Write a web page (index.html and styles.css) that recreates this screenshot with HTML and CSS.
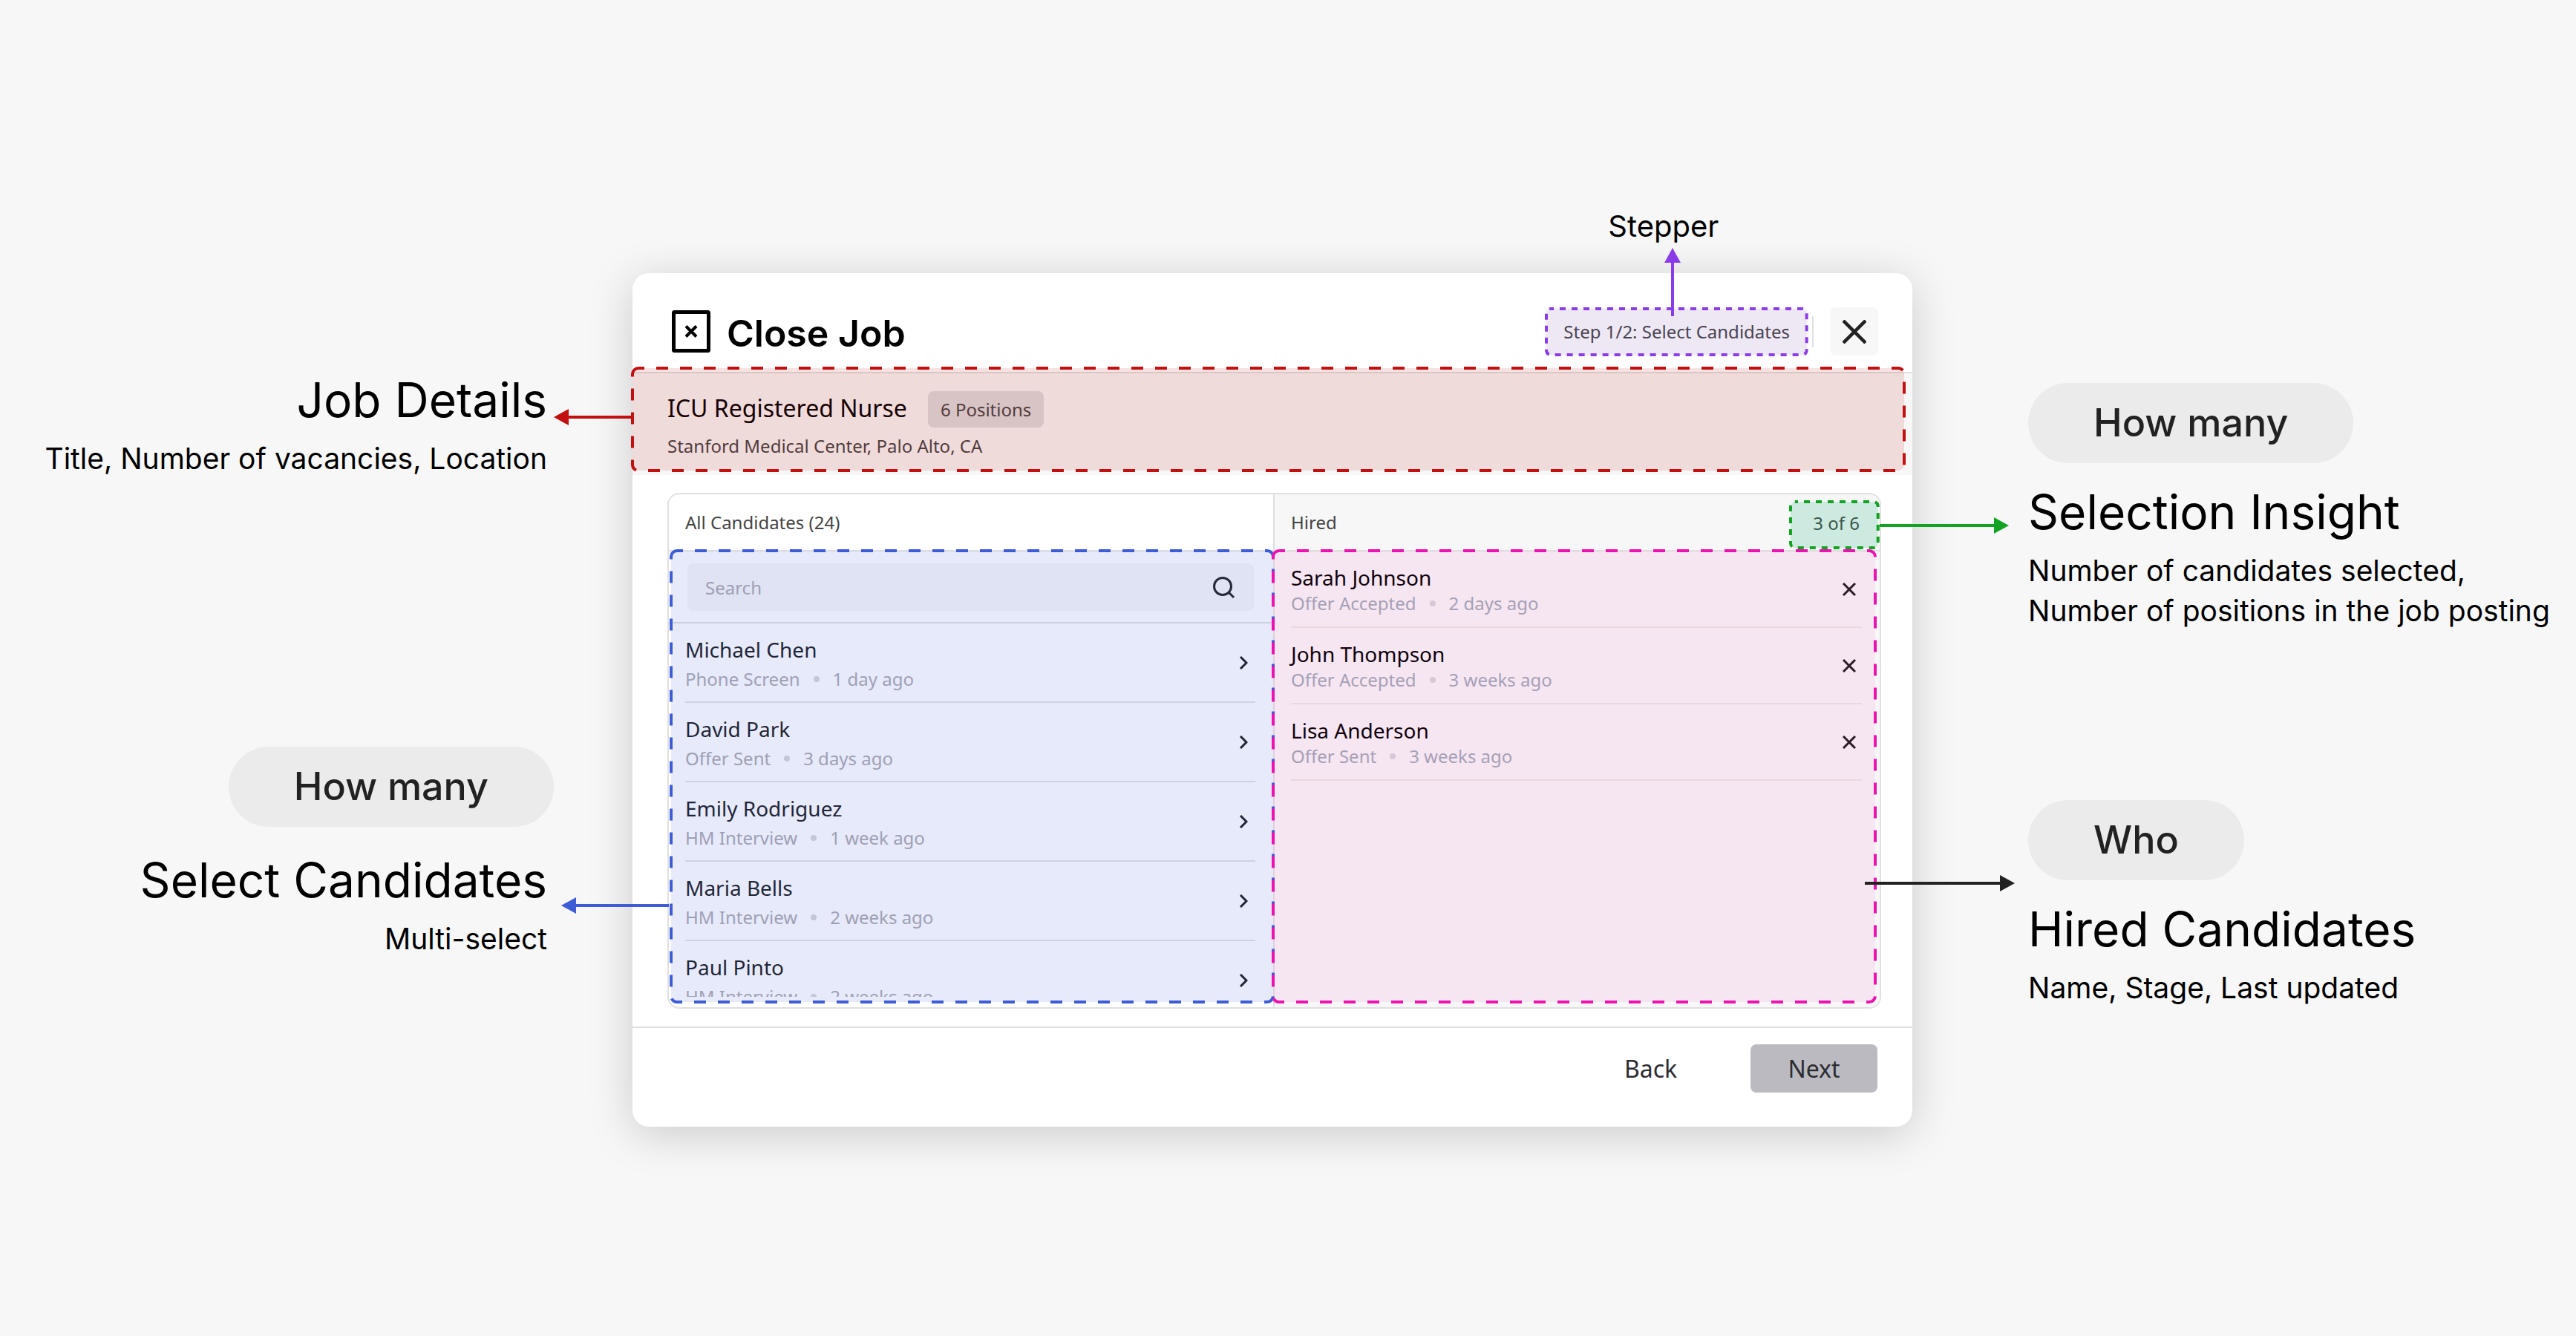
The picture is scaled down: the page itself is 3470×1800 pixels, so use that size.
FILE: index.html
```html
<!DOCTYPE html>
<html lang="en">
<head>
    <meta charset="utf-8">
    <title>Close Job - annotated modal</title>
    <link rel="stylesheet" href="styles.css">
</head>
<body>
    <main class="board">

        <!-- notes on the left -->
        <aside class="notes notes-left">
            <section class="note">
                <h2>Job Details</h2>
                <p>Title, Number of vacancies, Location</p>
            </section>
            <section class="note">
                <span class="pill">How many</span>
                <h2>Select Candidates</h2>
                <p>Multi-select</p>
            </section>
        </aside>

        <div class="modal" role="dialog" aria-labelledby="modal-title">
            <header class="modal-header">
                <svg class="title-icon" viewBox="0 0 52 57" fill="none" stroke="#000" stroke-width="5">
                    <rect x="2.500" y="2.500" width="47" height="52" rx="1"/>
                    <path d="M19 21.500l14 14M33 21.500l-14 14" stroke-width="4"/>
                </svg>
                <h1 id="modal-title">Close Job</h1>
                <div class="step">
                    Step 1/2: Select Candidates
                    <svg class="outline outline-step"><rect rx="6"/></svg>
                    <span class="step-note">Stepper</span>
                    <svg class="arrow arrow-step" viewBox="0 0 22 92">
                        <path d="M11 16V92" stroke="#8a3ce8" stroke-width="4"/>
                        <path d="M11 0L22 20H0z" fill="#8a3ce8"/>
                    </svg>
                </div>
                <span class="header-rule"></span>
                <button class="close" type="button" aria-label="Close">
                    <svg width="32" height="32" viewBox="0 0 32 32" fill="none" stroke="#222" stroke-width="4.500">
                        <path d="M1 1l30 30M31 1L1 31"/>
                    </svg>
                </button>
            </header>

            <section class="job">
                <div class="job-row">
                    <h3>ICU Registered Nurse</h3>
                    <span class="badge">6 Positions</span>
                </div>
                <p>Stanford Medical Center, Palo Alto, CA</p>
                <svg class="outline outline-job"><rect rx="8"/></svg>
                <svg class="arrow arrow-job" viewBox="0 0 106 22">
                    <path d="M16 11H106" stroke="#c20f0f" stroke-width="4"/>
                    <path d="M0 11L20 0V22z" fill="#c20f0f"/>
                </svg>
            </section>

            <div class="panel">
                <section class="col">
                    <div class="col-head">All Candidates (24)</div>
                    <div class="col-body">
                        <div class="search">
                            <input type="text" placeholder="Search" aria-label="Search candidates">
                            <svg class="search-icon" viewBox="0 0 30 30" fill="none" stroke="#222" stroke-width="3">
                                <circle cx="13" cy="13" r="11.500"/>
                                <path d="M21 21l7 7"/>
                            </svg>
                        </div>
                        <ul class="list">
                            <li>
                                <div><strong>Michael Chen</strong><p>Phone Screen <i></i> 1 day ago</p></div>
                                <button type="button" aria-label="Add Michael Chen"><svg width="12" height="18" viewBox="0 0 12 18"><path d="M2 1l8 8-8 8"/></svg></button>
                            </li>
                            <li>
                                <div><strong>David Park</strong><p>Offer Sent <i></i> 3 days ago</p></div>
                                <button type="button" aria-label="Add David Park"><svg width="12" height="18" viewBox="0 0 12 18"><path d="M2 1l8 8-8 8"/></svg></button>
                            </li>
                            <li>
                                <div><strong>Emily Rodriguez</strong><p>HM Interview <i></i> 1 week ago</p></div>
                                <button type="button" aria-label="Add Emily Rodriguez"><svg width="12" height="18" viewBox="0 0 12 18"><path d="M2 1l8 8-8 8"/></svg></button>
                            </li>
                            <li>
                                <div><strong>Maria Bells</strong><p>HM Interview <i></i> 2 weeks ago</p></div>
                                <button type="button" aria-label="Add Maria Bells"><svg width="12" height="18" viewBox="0 0 12 18"><path d="M2 1l8 8-8 8"/></svg></button>
                            </li>
                            <li>
                                <div><strong>Paul Pinto</strong><p>HM Interview <i></i> 2 weeks ago</p></div>
                                <button type="button" aria-label="Add Paul Pinto"><svg width="12" height="18" viewBox="0 0 12 18"><path d="M2 1l8 8-8 8"/></svg></button>
                            </li>
                        </ul>
                        <svg class="outline outline-all"><rect rx="8"/></svg>
                        <svg class="arrow arrow-all" viewBox="0 0 145 22">
                            <path d="M16 11H145" stroke="#3d5cd6" stroke-width="4"/>
                            <path d="M0 11L20 0V22z" fill="#3d5cd6"/>
                        </svg>
                    </div>
                </section>

                <section class="col col-hired">
                    <div class="col-head">
                        Hired
                        <div class="count">
                            3 of 6
                            <svg class="outline outline-count"><rect rx="6"/></svg>
                            <svg class="arrow arrow-count" viewBox="0 0 174 22">
                                <path d="M0 11H158" stroke="#12a322" stroke-width="4"/>
                                <path d="M174 11L154 0V22z" fill="#12a322"/>
                            </svg>
                        </div>
                    </div>
                    <div class="col-body">
                        <ul class="list">
                            <li>
                                <div><strong>Sarah Johnson</strong><p>Offer Accepted <i></i> 2 days ago</p></div>
                                <button type="button" aria-label="Remove Sarah Johnson"><svg width="18" height="18" viewBox="0 0 18 18"><path d="M1 1l16 16M17 1L1 17"/></svg></button>
                            </li>
                            <li>
                                <div><strong>John Thompson</strong><p>Offer Accepted <i></i> 3 weeks ago</p></div>
                                <button type="button" aria-label="Remove John Thompson"><svg width="18" height="18" viewBox="0 0 18 18"><path d="M1 1l16 16M17 1L1 17"/></svg></button>
                            </li>
                            <li>
                                <div><strong>Lisa Anderson</strong><p>Offer Sent <i></i> 3 weeks ago</p></div>
                                <button type="button" aria-label="Remove Lisa Anderson"><svg width="18" height="18" viewBox="0 0 18 18"><path d="M1 1l16 16M17 1L1 17"/></svg></button>
                            </li>
                        </ul>
                        <svg class="outline outline-hired"><rect rx="8"/></svg>
                        <svg class="arrow arrow-hired" viewBox="0 0 202 22">
                            <path d="M0 11H186" stroke="#222" stroke-width="4"/>
                            <path d="M202 11L182 0V22z" fill="#222"/>
                        </svg>
                    </div>
                </section>
            </div>

            <footer class="modal-footer">
                <button class="btn" type="button">Back</button>
                <button class="btn btn-next" type="button">Next</button>
            </footer>
        </div>

        <!-- notes on the right -->
        <aside class="notes notes-right">
            <section class="note">
                <span class="pill">How many</span>
                <h2>Selection Insight</h2>
                <p>Number of candidates selected,<br>Number of positions in the job posting</p>
            </section>
            <section class="note">
                <span class="pill">Who</span>
                <h2>Hired Candidates</h2>
                <p>Name, Stage, Last updated</p>
            </section>
        </aside>

    </main>
</body>
</html>
```

FILE: styles.css
```css
* {
    box-sizing: border-box;
}

body {
    margin: 0;
    min-height: 100vh;
    background: #f7f7f7;
    color: #000;
    font-family: "Noto Sans", sans-serif;
    font-size: 24px;
    line-height: 32px;
}

h1, h2, h3, p, ul {
    margin: 0;
    padding: 0;
    font-weight: 400;
}

button {
    border: none;
    padding: 0;
    background: none;
    color: inherit;
    font-family: inherit;
    cursor: pointer;
}

.board {
    display: grid;
    grid-template-columns: 852fr 1724fr 894fr;
    align-items: start;
}

/* notes */
.notes {
    display: flex;
    flex-direction: column;
    font-family: "Inter", sans-serif;
    white-space: nowrap;
}

.notes-left {
    padding: 503px 115px 0 0;
    gap: 361px;
    text-align: right;
}

.notes-right {
    padding: 516px 0 0 156px;
    gap: 228px;
}

.note h2 {
    margin-bottom: 16px;
    font-size: 64px;
    line-height: 72px;
}

.note p {
    font-size: 39px;
    line-height: 54px;
}

.pill {
    display: block;
    width: fit-content;
    margin-bottom: 30px;
    padding: 0 88px;
    border-radius: 54px;
    background: #ebebeb;
    color: #222;
    font-size: 52px;
    font-weight: 500;
    line-height: 108px;
}

.notes-left .pill {
    margin-left: auto;
    margin-right: -9px;
    margin-bottom: 36px;
}

/* modal */
.modal {
    margin-top: 368px;
    border-radius: 22px;
    background: #fff;
    box-shadow: 0 10px 60px rgba(0, 0, 0, 0.18);
}

.modal-header {
    display: flex;
    align-items: center;
    height: 133px;
    padding: 24px 46px 0 53px;
}

.title-icon {
    width: 52px;
    height: 57px;
    margin-right: 22px;
}

.modal-header h1 {
    padding-top: 4px;
    font-family: "Inter", sans-serif;
    font-size: 50px;
    font-weight: 600;
    line-height: 60px;
}

.step {
    position: relative;
    margin-left: auto;
    padding: 0 25px;
    color: #444;
    line-height: 66px;
    background: #f7f7f7;
    border-radius: 8px;
}

.header-rule {
    width: 2px;
    height: 42px;
    margin: 0 22px 0 5px;
    background: #e0e0e4;
}

.close {
    display: flex;
    align-items: center;
    justify-content: center;
    width: 65px;
    height: 65px;
    border-radius: 8px;
    background: #f7f7f7;
}

.job {
    position: relative;
    padding: 24px 47px 23px;
    border-top: 2px solid #e0e0e0;
    background: #f7f7f7;
    color: #444;
}

.job-row {
    display: flex;
    align-items: flex-start;
    gap: 28px;
    margin-bottom: 9px;
}

.job h3 {
    color: #000;
    font-size: 32px;
    line-height: 46px;
}

.badge {
    padding: 0 17px;
    border-radius: 8px;
    background: #dcdcde;
    line-height: 49px;
}

/* candidates panel */
.panel {
    display: grid;
    grid-template-columns: 814fr 817fr;
    margin: 24px 42px 24px 47px;
    border: 2px solid #e0e0e0;
    border-radius: 16px;
}

.col-hired {
    border-left: 2px solid #e0e0e0;
    border-radius: 0 14px 14px 0;
    background: #f7f7f7;
}

.col-head {
    display: flex;
    align-items: center;
    justify-content: space-between;
    height: 77px;
    padding-left: 22px;
    border-bottom: 2px solid #e0e0e0;
    color: #444;
}

.count {
    position: relative;
    align-self: flex-end;
    margin-bottom: 1px;
    padding: 0 27px 4px 32px;
    line-height: 62px;
}

.col-body {
    position: relative;
    height: 614px;
    padding-bottom: 14px;
    display: flex;
    flex-direction: column;
}

.search {
    position: relative;
    padding: 16px 26px 15px 25px;
    border-bottom: 2px solid #e0e0e0;
}

.search input {
    display: block;
    width: 100%;
    height: 64px;
    padding: 0 24px;
    border: none;
    border-radius: 8px;
    background: #f7f7f7;
    font-family: inherit;
    font-size: 24px;
}

.search input::placeholder {
    color: #aeaab0;
    opacity: 1;
}

.search-icon {
    position: absolute;
    right: 51px;
    top: 34px;
    width: 30px;
    height: 30px;
}

.list {
    flex: 1;
    min-height: 0;
    overflow: hidden;
    padding: 0 24px 0 22px;
    list-style: none;
}

.list li {
    display: flex;
    align-items: center;
    justify-content: space-between;
    height: 107px;
    border-bottom: 2px solid #e4e4e4;
}

.list strong {
    display: block;
    margin-bottom: 4px;
    color: #1c1c1e;
    font-size: 28px;
    font-weight: 400;
    line-height: 40px;
}

.list p {
    display: flex;
    align-items: center;
    gap: 18px;
    color: #aeaab0;
}

.list i {
    width: 8px;
    height: 8px;
    border-radius: 50%;
    background: #d8d6da;
}

.list button {
    display: flex;
    padding: 8px 10px;
}

.list button svg {
    fill: none;
    stroke: #1c1c1e;
    stroke-width: 3;
}

.col-hired .list li {
    height: 103px;
    border-color: #ebe7e6;
}

.col-hired .list p {
    color: #a2acb8;
}

.col-hired .list strong {
    margin-bottom: 0;
    color: #000;
    line-height: 38px;
}

.col-hired .list button {
    padding: 8px;
}

.modal-footer {
    display: flex;
    justify-content: flex-end;
    gap: 49px;
    padding: 22px 47px 46px;
    border-top: 2px solid #e0e0e0;
}

.btn {
    width: 171px;
    height: 65px;
    border-radius: 8px;
    color: #2c2c30;
    font-size: 32px;
}

.btn-next {
    background: #bbbac0;
}

/* dashed highlights, drawn over the modal */
.outline {
    position: absolute;
    pointer-events: none;
    overflow: visible;
}

.outline rect {
    x: 2px;
    y: 2px;
    width: calc(100% - 4px);
    height: calc(100% - 4px);
    stroke-width: 4;
    stroke-dasharray: 16 16;
    stroke-dashoffset: 8;
}

.outline-step {
    top: 0;
    left: 0;
    width: 100%;
    height: 100%;
}

.outline-step rect {
    fill: rgba(138, 60, 232, 0.08);
    stroke: #8a3ce8;
    stroke-dasharray: 8 8;
    stroke-dashoffset: 4;
}

.outline-job {
    top: -9px;
    left: -2px;
    width: calc(100% - 7px);
    height: calc(100% + 5px);
}

.outline-job rect {
    fill: rgba(193, 16, 16, 0.12);
    stroke: #c20f0f;
}

.outline-all {
    top: -3px;
    left: 1px;
    width: calc(100% + 1px);
    height: 612px;
}

.outline-all rect {
    fill: rgba(61, 92, 214, 0.13);
    stroke: #3d5cd6;
}

.outline-hired {
    top: -3px;
    left: -4px;
    width: 100%;
    height: 612px;
}

.outline-hired rect {
    fill: rgba(232, 20, 176, 0.07);
    stroke: #ec13b0;
}

.outline-count {
    top: 0;
    left: 0;
    width: 100%;
    height: 100%;
}

.outline-count rect {
    fill: rgba(0, 170, 110, 0.17);
    stroke: #12a322;
    stroke-dasharray: 8 8;
    stroke-dashoffset: 4;
}

.arrow {
    position: absolute;
    height: 22px;
    pointer-events: none;
    z-index: 1;
}

.arrow-step {
    top: -80px;
    left: 161px;
    width: 22px;
    height: 92px;
}

.step-note {
    position: absolute;
    top: -136px;
    left: 85px;
    color: #000;
    font-family: "Inter", sans-serif;
    font-size: 40px;
    line-height: 54px;
}

.arrow-job {
    top: 48px;
    right: 100%;
    width: 106px;
}

.arrow-all {
    top: 466px;
    right: 100%;
    width: 145px;
}

.arrow-count {
    top: 23px;
    left: 100%;
    width: 174px;
}

.arrow-hired {
    top: 436px;
    right: -182px;
    width: 202px;
}
```
